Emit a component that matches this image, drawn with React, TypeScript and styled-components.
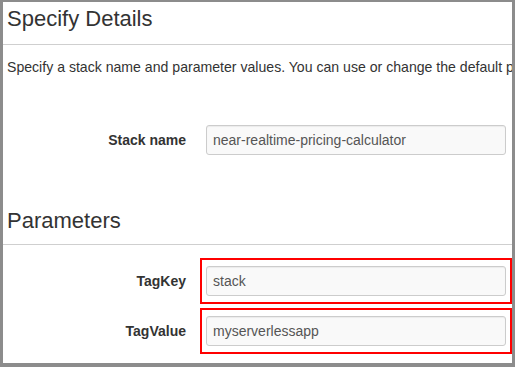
import React from "react";
import styled, { createGlobalStyle } from "styled-components";

const GlobalStyle = createGlobalStyle`
  html, body {
    margin: 0;
    padding: 0;
    background: #ffffff;
  }
  body {
    font-family: "Liberation Sans", Arial, Helvetica, sans-serif;
    color: #333333;
  }
  * { box-sizing: border-box; }
`;

const Frame = styled.div`
  width: 515px;
  height: 367px;
  border-style: solid;
  border-color: #8c8c8c;
  border-width: 2px 3px 4px 3px;
  background: #ffffff;
  overflow: hidden;
  padding-top: 3px;
`;

const Heading = styled.h2<{ $gap: number }>`
  margin: 0 0 ${p => p.$gap}px 0;
  padding-left: 4px;
  font-size: 22px;
  line-height: 28px;
  font-weight: 400;
  color: #333333;
`;

const Rule = styled.hr`
  margin: 0;
  border: none;
  border-top: 1px solid #cfcfcf;
  height: 0;
`;

const Intro = styled.p`
  margin: 13px 0 0 0;
  padding-left: 4px;
  font-size: 14.1px;
  line-height: 18px;
  white-space: nowrap;
  overflow: hidden;
  color: #333333;
`;

const Section = styled.div<{ $top: number }>`
  margin-top: ${p => p.$top}px;
`;

const FormRow = styled.div<{ $gap?: number }>`
  display: grid;
  grid-template-columns: 183px 312px;
  column-gap: 14px;
  align-items: center;
  margin-top: ${p => p.$gap ?? 0}px;
`;

const Label = styled.label`
  text-align: right;
  font-size: 14px;
  font-weight: 700;
  color: #333333;
`;

const Field = styled.div<{ $marked?: boolean }>`
  border: 2px solid ${p => (p.$marked ? "#ff0000" : "transparent")};
  padding: 6px 4px;
`;

const Input = styled.input`
  display: block;
  width: 300px;
  height: 30px;
  margin: 0;
  padding: 0 6px;
  border: 1px solid #cccccc;
  border-radius: 3px;
  background: #f9f9f9;
  box-shadow: inset 0 1px 1px rgba(0, 0, 0, 0.06);
  font-family: "Liberation Sans", Arial, Helvetica, sans-serif;
  font-size: 14px;
  color: #555555;
  outline: none;
`;

type Param = { label: string; value: string; marked?: boolean };

const params: Param[] = [
  { label: "TagKey", value: "stack", marked: true },
  { label: "TagValue", value: "myserverlessapp", marked: true },
];

export default function App() {
  return (
    <>
      <GlobalStyle />
      <Frame>
        <Heading $gap={11}>Specify Details</Heading>
        <Rule />
        <Intro>
          Specify a stack name and parameter values. You can use or change the default parameter values, which are defined in the AWS CloudFormation template.
        </Intro>

        <Section $top={41}>
          <FormRow>
            <Label>Stack name</Label>
            <Field>
              <Input readOnly value="near-realtime-pricing-calculator" />
            </Field>
          </FormRow>
        </Section>

        <Section $top={44}>
          <Heading $gap={9}>Parameters</Heading>
          <Rule />
          {params.map((p, i) => (
            <FormRow key={p.label} $gap={i === 0 ? 13 : 4}>
              <Label>{p.label}</Label>
              <Field $marked={p.marked}>
                <Input readOnly value={p.value} />
              </Field>
            </FormRow>
          ))}
        </Section>
      </Frame>
    </>
  );
}
